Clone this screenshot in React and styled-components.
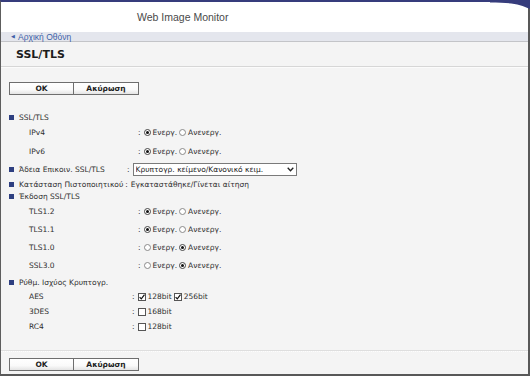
import React from "react"
import styled, { createGlobalStyle } from "styled-components"

const GlobalStyle = createGlobalStyle`
  html, body {
    margin: 0;
    padding: 0;
    background: #ffffff;
    overflow: hidden;
  }
`

const Frame = styled.div`
  position: relative;
  box-sizing: border-box;
  width: 530px;
  height: 376px;
  display: flex;
  flex-direction: column;
  border-top: 2px solid #363c7c;
  border-left: 1px solid #5d5d5d;
  border-right: 2px solid #585858;
  border-bottom: 2px solid #585858;
  background: #f4f4f4;
  font-family: "DejaVu Sans", Verdana, sans-serif;
  color: #2e2e2e;
`

const Corner = styled.svg`
  position: absolute;
  top: -2px;
  right: -2px;
`

const Header = styled.div`
  height: 30px;
  flex: none;
  display: flex;
  align-items: center;
  padding-left: 136px;
  background: #ffffff;
  font-family: "Liberation Sans", Arial, sans-serif;
  font-size: 10.5px;
  color: #4a4a4a;
`

const Crumbs = styled.div`
  height: 9px;
  flex: none;
  display: flex;
  align-items: center;
  padding-left: 10px;
  background: #e4e6ed;
  border-bottom: 1px solid #c3c4c8;
  font-family: "Liberation Sans", Arial, sans-serif;
  font-size: 8.5px;
  color: #3d5fa8;
`

const Arrow = styled.span`
  font-size: 4.5px;
  margin-right: 3px;
`

const TitleBar = styled.div`
  height: 24px;
  flex: none;
  display: flex;
  align-items: center;
  padding-left: 15px;
  background: #f4f4f4;
  border-bottom: 1px solid #d6d6d6;
  box-shadow: 0 1px 0 #fbfbfb;
  font-size: 11px;
  font-weight: bold;
  color: #1c1c1c;
`

const Content = styled.div`
  flex: 1;
  display: flex;
  flex-direction: column;
  padding: 15px 0 3px 0;
`

const ButtonBar = styled.div`
  display: flex;
  padding-left: 8px;
`

const Button = styled.button`
  box-sizing: border-box;
  width: ${(p) => p.w}px;
  height: 13px;
  padding: 0;
  margin: 0 -1px 0 0;
  border: 1px solid #6e6e6e;
  background: linear-gradient(#ffffff 0%, #fafafa 60%, #e4e4e4 100%);
  font-family: "DejaVu Sans", Verdana, sans-serif;
  font-size: 7.5px;
  font-weight: bold;
  color: #222;
  line-height: 11px;
`

const Form = styled.div`
  display: flex;
  flex-direction: column;
  padding-top: 16px;
  flex: 1;
`

const Row = styled.div`
  display: flex;
  align-items: center;
  height: ${(p) => p.h}px;
  padding-left: ${(p) => (p.indent ? 28 : 8)}px;
  font-size: 7.5px;
  white-space: nowrap;
`

const Bullet = styled.span`
  width: 5px;
  height: 5px;
  margin-right: 5px;
  background: #2e3f80;
  flex: none;
`

const Label = styled.span`
  min-width: ${(p) => p.w}px;
`

const Colon = styled.span`
  margin: 0 3px 0 2px;
`

const Option = styled.label`
  display: inline-flex;
  align-items: center;
  margin-right: 2px;
`

const Radio = styled.span`
  box-sizing: border-box;
  width: 7px;
  height: 7px;
  border-radius: 50%;
  border: 1px solid ${(p) => (p.checked ? "#444" : "#8a8a8a")};
  background: #fff;
  margin-right: 2px;
  display: inline-flex;
  align-items: center;
  justify-content: center;
  &::after {
    content: "";
    width: 3px;
    height: 3px;
    border-radius: 50%;
    background: ${(p) => (p.checked ? "#111" : "transparent")};
  }
`

const Box = styled.span`
  box-sizing: border-box;
  width: 8px;
  height: 8px;
  border: 1px solid #555;
  background: #fff;
  margin-right: 2px;
  display: inline-flex;
  align-items: center;
  justify-content: center;
`

const SelectWrap = styled.span`
  position: relative;
  display: inline-flex;
`

const Select = styled.select`
  appearance: none;
  box-sizing: border-box;
  width: 164px;
  height: 13px;
  margin: 0;
  padding: 0 12px 0 2px;
  border: 1px solid #7a7a7a;
  border-radius: 0;
  background: #fff;
  font-family: "DejaVu Sans", Verdana, sans-serif;
  font-size: 7.5px;
  color: #222;
`

const Chevron = styled.svg`
  position: absolute;
  right: 3px;
  top: 4px;
  pointer-events: none;
`

const Divider = styled.div`
  margin: auto 0 6px 0;
  border-top: 1px solid #dedede;
  border-bottom: 1px dotted #fdfdfd;
`

const Buttons = () => (
  <ButtonBar>
    <Button w={65}>OK</Button>
    <Button w={66}>Ακύρωση</Button>
  </ButtonBar>
)

const RadioPair = ({ on }) => (
  <>
    <Option>
      <Radio checked={on} />
      Ενεργ.
    </Option>
    <Option>
      <Radio checked={!on} />
      Ανενεργ.
    </Option>
  </>
)

const Check = ({ checked, text }) => (
  <Option>
    <Box>
      {checked && (
        <svg width="6" height="6" viewBox="0 0 6 6">
          <path d="M0.6 3.1 L2.3 4.9 L5.5 0.6" fill="none" stroke="#111" strokeWidth="1.2" />
        </svg>
      )}
    </Box>
    {text}
  </Option>
)

const Section = ({ h, children }) => (
  <Row h={h}>
    <Bullet />
    {children}
  </Row>
)

const RadioRow = ({ label, on, h }) => (
  <Row indent h={h}>
    <Label w={107}>{label}</Label>
    <Colon>:</Colon>
    <RadioPair on={on} />
  </Row>
)

const CheckRow = ({ label, items }) => (
  <Row indent h={15}>
    <Label w={101}>{label}</Label>
    <Colon>:</Colon>
    {items.map((it) => (
      <Check key={it.text} {...it} />
    ))}
  </Row>
)

export default function App() {
  return (
    <>
      <GlobalStyle />
      <Frame>
        <Corner width="40" height="9" viewBox="0 0 40 9">
          <path d="M0 0 H40 V9 C30 4 20 2.5 0 2.5 Z" fill="#363c7c" />
        </Corner>
        <Header>Web Image Monitor</Header>
        <Crumbs>
          <Arrow>◀</Arrow>Αρχική Οθόνη
        </Crumbs>
        <TitleBar>SSL/TLS</TitleBar>
        <Content>
          <Buttons />
          <Form>
            <Section h={12}>SSL/TLS</Section>
            <RadioRow label="IPv4" on h={19} />
            <RadioRow label="IPv6" on h={19} />
            <Section h={17}>
              <Label w={106}>Άδεια Επικοιν. SSL/TLS</Label>
              <Colon>:</Colon>
              <SelectWrap>
                <Select defaultValue="c">
                  <option value="c">Κρυπτογρ. κείμενο/Κανονικό κειμ.</option>
                </Select>
                <Chevron width="7" height="5" viewBox="0 0 7 5">
                  <path d="M0.7 0.8 L3.5 3.8 L6.3 0.8" fill="none" stroke="#222" strokeWidth="1.3" />
                </Chevron>
              </SelectWrap>
            </Section>
            <Section h={13}>
              Κατάσταση Πιστοποιητικού
              <Colon>:</Colon>
              Εγκαταστάθηκε/Γίνεται αίτηση
            </Section>
            <Section h={11}>Έκδοση SSL/TLS</Section>
            <RadioRow label="TLS1.2" on h={18} />
            <RadioRow label="TLS1.1" on h={18} />
            <RadioRow label="TLS1.0" h={18} />
            <RadioRow label="SSL3.0" h={19} />
            <Section h={14}>Ρύθμ. Ισχύος Κρυπτογρ.</Section>
            <CheckRow
              label="AES"
              items={[
                { checked: true, text: "128bit" },
                { checked: true, text: "256bit" },
              ]}
            />
            <CheckRow label="3DES" items={[{ text: "168bit" }]} />
            <CheckRow label="RC4" items={[{ text: "128bit" }]} />
            <Divider />
          </Form>
          <Buttons />
        </Content>
      </Frame>
    </>
  )
}
